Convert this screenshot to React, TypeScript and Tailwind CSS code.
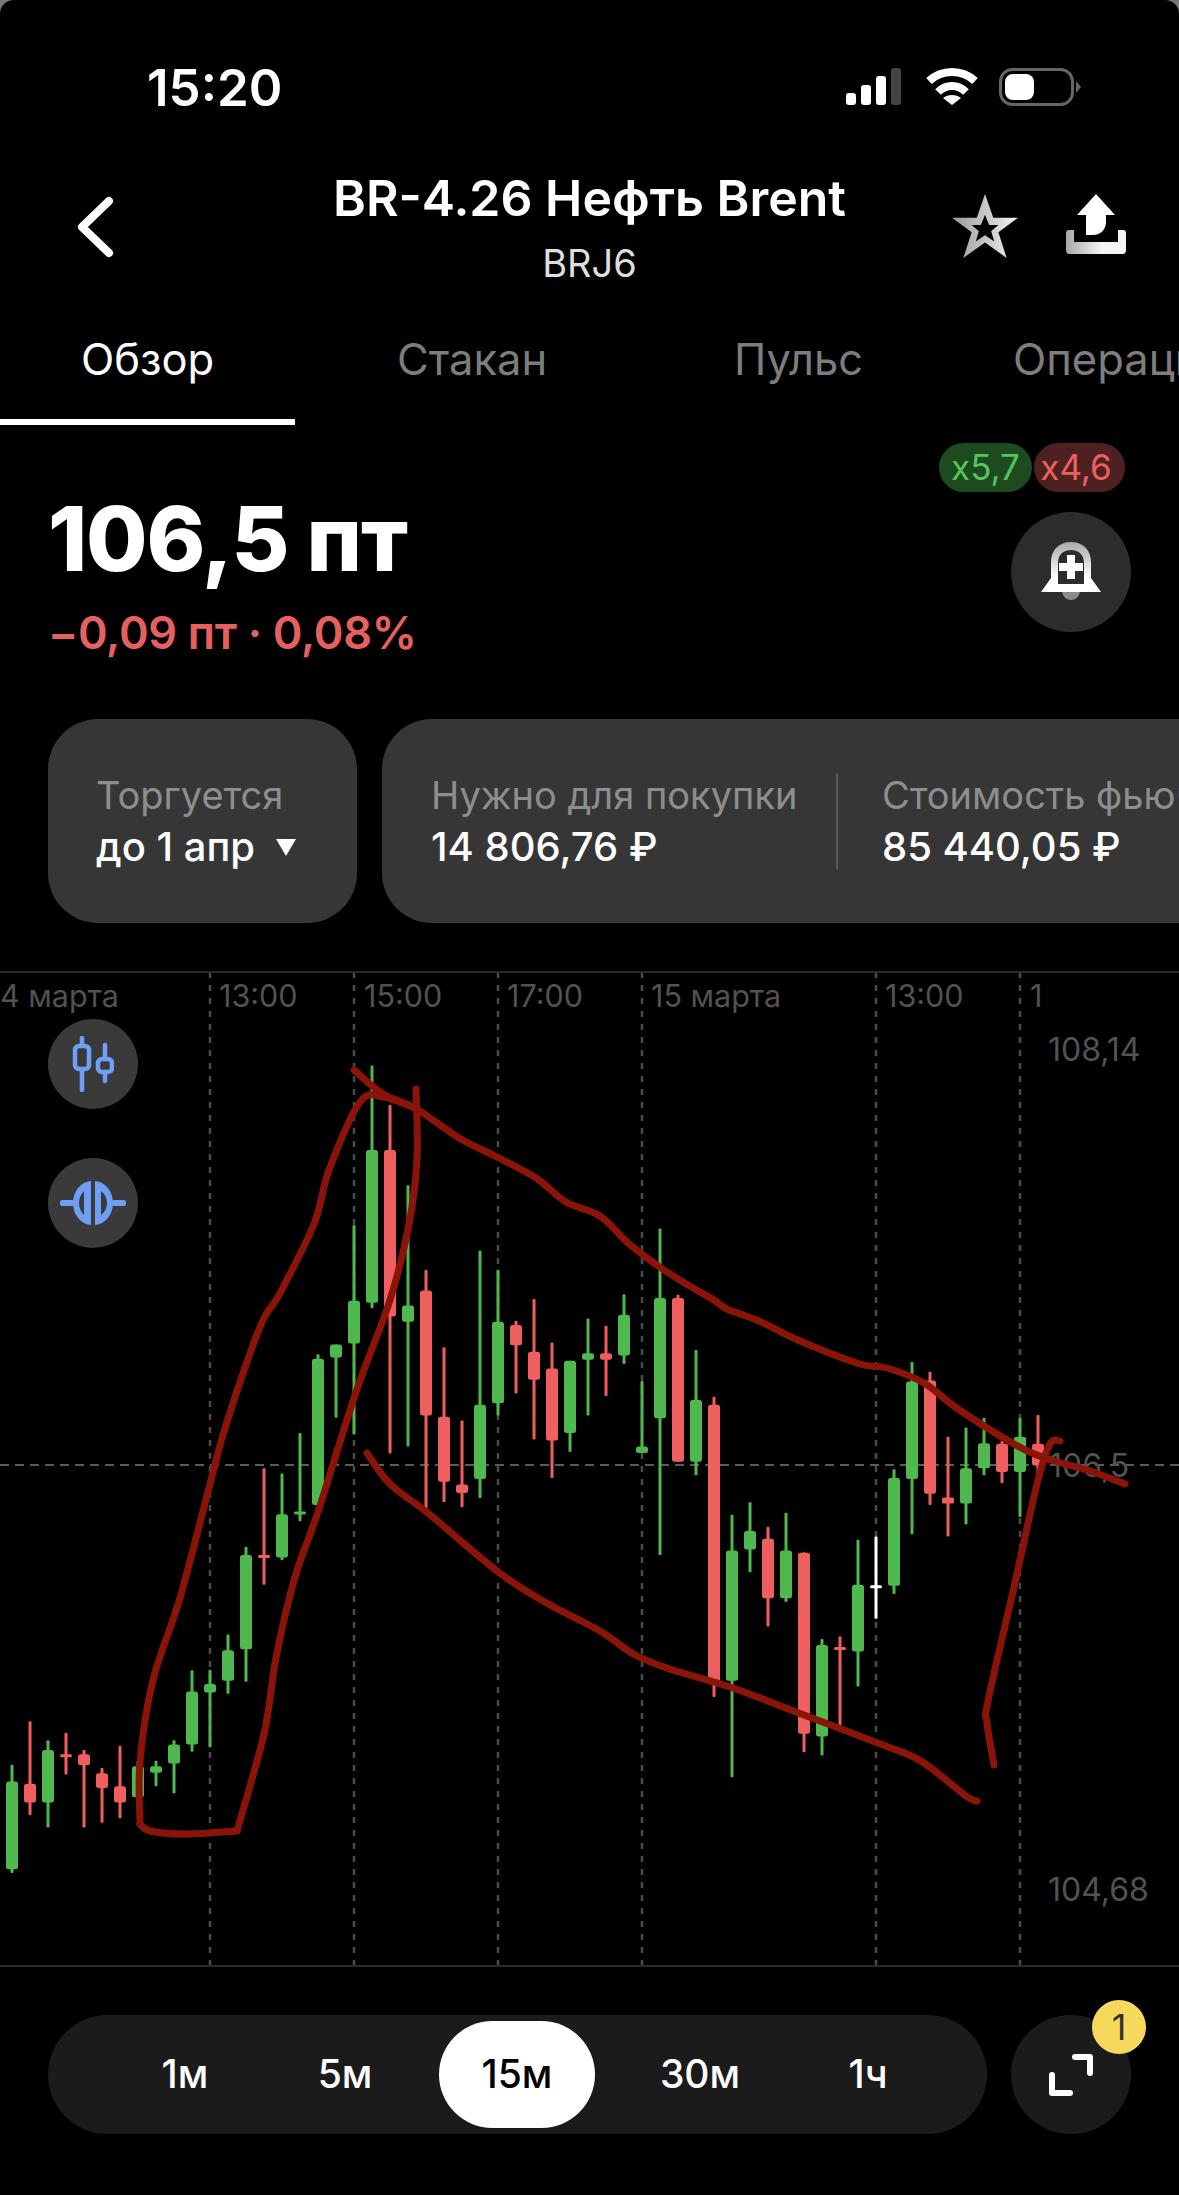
const FONT = "font-['Inter','Noto_Sans',sans-serif]";
const GREEN = "#4fb84f";
const RED = "#ef5f5f";

// wickTop, wickBottom, bodyTop, bodyBottom, measured on a zoomed crop of the chart
type Candle = [string, number, number, number, number];
const candles: Candle[] = [
  ["g", 1337, 1537, 1368, 1530],
  ["r", 1257, 1430, 1372, 1407],
  ["g", 1292, 1453, 1310, 1407],
  ["r", 1278, 1355, 1318, 1321],
  ["r", 1310, 1453, 1318, 1338],
  ["r", 1343, 1444, 1353, 1380],
  ["r", 1302, 1436, 1377, 1407],
  ["g", 1330, 1400, 1340, 1397],
  ["g", 1330, 1377, 1340, 1352],
  ["g", 1292, 1390, 1300, 1335],
  ["g", 1163, 1313, 1202, 1300],
  ["g", 1162, 1305, 1188, 1204],
  ["g", 1097, 1206, 1126, 1182],
  ["g", 935, 1184, 950, 1124],
  ["r", 790, 1005, 950, 955],
  ["g", 800, 960, 875, 955],
  ["g", 725, 888, 870, 875],
  ["g", 580, 860, 588, 858],
  ["g", 562, 697, 562, 586],
  ["g", 342, 728, 481, 560],
  ["g", 47, 495, 203, 485],
  ["r", 120, 763, 203, 510],
  ["g", 268, 750, 490, 520],
  ["r", 424, 865, 462, 693],
  ["r", 567, 853, 695, 815],
  ["r", 702, 862, 820, 836],
  ["g", 389, 845, 673, 810],
  ["g", 424, 693, 520, 670],
  ["r", 518, 652, 526, 563],
  ["r", 478, 737, 575, 627],
  ["r", 558, 808, 606, 739],
  ["g", 592, 760, 592, 725],
  ["g", 514, 693, 578, 590],
  ["r", 527, 657, 578, 590],
  ["g", 469, 598, 507, 582],
  ["g", 629, 762, 750, 762],
  ["g", 348, 950, 476, 698],
  ["r", 470, 778, 476, 778],
  ["g", 572, 803, 664, 778],
  ["r", 658, 1212, 673, 1185],
  ["g", 876, 1360, 942, 1182],
  ["g", 853, 982, 906, 940],
  ["r", 898, 1082, 920, 1030],
  ["g", 872, 1037, 942, 1030],
  ["r", 945, 1314, 946, 1280],
  ["g", 1105, 1320, 1116, 1285],
  ["r", 1100, 1265, 1120, 1125],
  ["g", 922, 1193, 1005, 1128],
  ["w", 916, 1068, 1006, 1010],
  ["g", 792, 1022, 808, 1007],
  ["g", 594, 912, 630, 810],
  ["r", 612, 858, 628, 837],
  ["r", 732, 916, 844, 855],
  ["g", 715, 894, 790, 855],
  ["g", 697, 803, 744, 790],
  ["r", 740, 818, 745, 797],
  ["g", 697, 880, 732, 797],
  ["r", 692, 810, 745, 785],
];

const CHART_TOP = 972;
const toY = (v: number) => 1040 + v / 1.845 - CHART_TOP;

const strokes: number[][][] = [
  [[354,1070],[383,1094],[415,1108],[459,1138],[497,1157],[536,1178],[566,1202],[600,1216],[628,1243],[661,1268],[688,1285],[714,1300],[727,1309],[759,1321],[800,1341],[860,1364],[887,1368],[924,1383],[958,1409],[1014,1444],[1045,1458],[1090,1471],[1125,1484]],
  // the loop is three pieces so its bottom corners stay sharp
  [[416,1089],[417,1159],[409,1224],[390,1300],[356,1392],[318,1512],[295,1577],[276,1658],[264,1734],[237,1831]],
  [[237,1831],[184,1834],[150,1831],[140,1824]],
  [[140,1824],[140,1761],[153,1680],[180,1598],[210,1484],[226,1425],[260,1327],[279,1295],[314,1224],[329,1170],[360,1102],[383,1097],[415,1108]],
  [[367,1453],[390,1484],[429,1514],[497,1571],[543,1601],[600,1631],[635,1655],[673,1670],[733,1688],[804,1715],[883,1745],[921,1761],[966,1796],[977,1801]],
  [[1060,1441],[1050,1444],[1037,1484],[1014,1587],[988,1701],[987,1723],[994,1765]],
];

// catmull-rom through the hand drawn points
function smooth(pts: number[][]) {
  let d = `M${pts[0][0]} ${pts[0][1] - CHART_TOP}`;
  for (let i = 0; i < pts.length - 1; i++) {
    const p0 = pts[Math.max(i - 1, 0)];
    const p1 = pts[i];
    const p2 = pts[i + 1];
    const p3 = pts[Math.min(i + 2, pts.length - 1)];
    const c1x = p1[0] + (p2[0] - p0[0]) / 6;
    const c1y = p1[1] + (p2[1] - p0[1]) / 6 - CHART_TOP;
    const c2x = p2[0] - (p3[0] - p1[0]) / 6;
    const c2y = p2[1] - (p3[1] - p1[1]) / 6 - CHART_TOP;
    d += ` C${c1x} ${c1y} ${c2x} ${c2y} ${p2[0]} ${p2[1] - CHART_TOP}`;
  }
  return d;
}

const gridX = [210, 354, 498, 642, 876, 1020];

function StatusBar() {
  return (
    <div className="flex h-[150px] items-start justify-between pl-[147px] pr-[98px] pt-[59px]">
      <span className="text-[51px] font-semibold leading-[58px] text-white">15:20</span>
      <div className="flex items-center pt-[9px]">
        <svg width="56" height="38" viewBox="0 0 56 38">
          <rect x="0" y="25" width="10" height="12" rx="3" fill="#fff" />
          <rect x="15" y="17" width="10" height="20" rx="3" fill="#fff" />
          <rect x="30" y="8" width="10" height="29" rx="3" fill="#fff" />
          <rect x="45" y="0" width="10" height="37" rx="3" fill="#444" />
        </svg>
        <svg width="52" height="38" viewBox="0 0 52 38" fill="none" stroke="#fff" strokeWidth="8" className="ml-[24px] mr-[21px]">
          <path d="M3 13C16 1 36 1 49 13" />
          <path d="M12 24C20 16 32 16 40 24" />
          <path d="M26 37L17 30C22 26 30 26 35 30Z" fill="#fff" stroke="none" />
        </svg>
        <svg width="82" height="38" viewBox="0 0 82 38">
          <rect x="1.5" y="1.5" width="72" height="35" rx="12" fill="none" stroke="#666" strokeWidth="3" />
          <rect x="6" y="6" width="29" height="26" rx="8" fill="#fff" />
          <path d="M77 13L82 19L77 25Z" fill="#666" />
        </svg>
      </div>
    </div>
  );
}

function Header() {
  return (
    <div className="relative flex h-[135px] items-start justify-between pl-[76px] pr-[53px]">
      <svg width="38" height="62" viewBox="0 0 38 62" fill="none" stroke="#fff" strokeWidth="8" strokeLinecap="round" strokeLinejoin="round" className="mt-[46px]">
        <path d="M33 5L6 31L33 57" />
      </svg>
      <div className="absolute left-0 right-0 top-[18px] text-center">
        <div className="text-[50px] font-semibold leading-[60px] text-white">BR-4.26 Нефть Brent</div>
        <div className="mt-[13px] text-[38px] leading-[44px] text-[#dedede]">BRJ6</div>
      </div>
      <div className="flex items-start gap-[47px] pt-[44px]">
        <svg width="68" height="64" viewBox="0 0 66 62">
          <defs>
            <linearGradient id="starFill" x1="0" y1="0" x2="1" y2="0">
              <stop offset="0" stopColor="#9a9a9a" />
              <stop offset="1" stopColor="#f2f2f2" />
            </linearGradient>
          </defs>
          <path
            fillRule="evenodd"
            d="M33 0L41 23H65L46 37L54 62L33 47L12 62L20 37L1 23H25ZM33 20L29 30H20L27 36L24 46L33 40L42 46L39 36L46 30H37Z"
            fill="url(#starFill)"
          />
        </svg>
        <svg width="60" height="60" viewBox="0 0 60 60">
          <defs>
            <linearGradient id="trayFill" x1="0" y1="0" x2="1" y2="0">
              <stop offset="0" stopColor="#a8a8a8" />
              <stop offset="0.6" stopColor="#f4f4f4" />
            </linearGradient>
          </defs>
          <path d="M30 0L49 21H40V28C40 35 35 41 27 41H20V21H11Z" fill="#fff" />
          <path
            d="M0 39C0 37 1 36 3 36H8V48H52V36H57C59 36 60 37 60 39V56C60 58 59 60 57 60H3C1 60 0 58 0 56Z"
            fill="url(#trayFill)"
          />
        </svg>
      </div>
    </div>
  );
}

function Tabs() {
  const tabs = [
    { label: "Стакан", className: "left-[397px]" },
    { label: "Пульс", className: "left-[734px]" },
    { label: "Операции", className: "left-[1013px]" },
  ];
  return (
    <div className="relative h-[140px] overflow-hidden">
      <div className="flex h-[140px] w-[295px] items-start justify-center border-b-[6px] border-white pt-[49px] text-[43.5px] leading-[50px] text-white">
        Обзор
      </div>
      {tabs.map((t) => (
        <span key={t.label} className={`absolute top-[49px] text-[43.5px] leading-[50px] text-[#7d7d7d] ${t.className}`}>
          {t.label}
        </span>
      ))}
    </div>
  );
}

function PriceBlock() {
  return (
    <div className="relative h-[294px] pl-[48px]">
      <div className="absolute right-[54px] top-[18px] flex items-center gap-[2px]">
        <span className="flex h-[49px] w-[93px] items-center justify-center rounded-full bg-[#1d4a1f] text-[35px] text-[#58c25c]">
          x5,7
        </span>
        <span className="flex h-[49px] w-[91px] items-center justify-center rounded-full bg-[#4e2121] pr-[7px] text-[35px] text-[#ee6060]">
          x4,6
        </span>
      </div>
      <div className="absolute right-[48px] top-[87px] flex h-[120px] w-[120px] items-center justify-center rounded-full bg-[#2c2c2c]">
        <svg width="60" height="60" viewBox="0 0 60 60">
          <defs>
            <linearGradient id="bellFill" x1="0" y1="0" x2="0" y2="1">
              <stop offset="0" stopColor="#a9a9a9" />
              <stop offset="0.7" stopColor="#ffffff" />
            </linearGradient>
          </defs>
          <path d="M21 48H39C39 54 35 58 30 58C25 58 21 54 21 48Z" fill="#8c8c8c" />
          <path
            fillRule="evenodd"
            d="M30 0C42 0 50 8 50 20V36L60 50H0L10 36V20C10 8 18 0 30 0ZM30 8C22 8 17 13 17 21V42H43V21C43 13 38 8 30 8Z"
            fill="url(#bellFill)"
          />
          <path d="M26 13H34V21H42V29H34V37H26V29H18V21H26Z" fill="#fff" />
        </svg>
      </div>
      <div className="pt-[61px] text-[89px] font-extrabold leading-[106px] tracking-[-1.2px] text-white">106,5 пт</div>
      <div className="mt-[16px] text-[45px] font-semibold leading-[50px] tracking-[-0.3px] text-[#e5605f]">
        −0,09 пт · 0,08%
      </div>
    </div>
  );
}

function InfoCards() {
  return (
    <div className="flex h-[204px] gap-[25px] overflow-hidden pl-[48px]">
      <div className="flex w-[309px] shrink-0 flex-col justify-center rounded-[50px] bg-[#363636] pl-[48px]">
        <span className="text-[38px] leading-[48px] text-[#8e8e8e]">Торгуется</span>
        <span className="mt-[4px] flex items-center text-[40px] font-medium leading-[48px] text-white">
          до 1 апр
          <svg width="22" height="18" viewBox="0 0 22 18" className="ml-[20px]">
            <path d="M1 1H21L11 18Z" fill="#fff" />
          </svg>
        </span>
      </div>
      <div className="flex w-[900px] shrink-0 items-center rounded-[50px] bg-[#363636] pl-[49px]">
        <div className="flex w-[369px] shrink-0 flex-col whitespace-nowrap">
          <span className="text-[38px] leading-[48px] text-[#8e8e8e]">Нужно для покупки</span>
          <span className="mt-[4px] text-[40px] font-medium leading-[48px] text-white">14 806,76 ₽</span>
        </div>
        <div className="ml-[36px] h-[96px] w-[2px] shrink-0 bg-[#5a5a5a]" />
        <div className="ml-[44px] flex flex-col whitespace-nowrap">
          <span className="text-[38px] leading-[48px] text-[#8e8e8e]">Стоимость фьючерса</span>
          <span className="mt-[4px] text-[40px] font-medium leading-[48px] text-white">85 440,05 ₽</span>
        </div>
      </div>
    </div>
  );
}

function ChartArea() {
  const dates = [
    { label: "4 марта", className: "left-0" },
    { label: "13:00", className: "left-[219px]" },
    { label: "15:00", className: "left-[364px]" },
    { label: "17:00", className: "left-[507px]" },
    { label: "15 марта", className: "left-[651px]" },
    { label: "13:00", className: "left-[885px]" },
    { label: "1", className: "left-[1030px]" },
  ];
  return (
    <div className="relative mt-[48px] h-[996px] overflow-hidden border-y-[2px] border-[#2a2a2a]">
      <svg width="1179" height="996" className="absolute left-0 top-[-1px]">
        {gridX.map((x) => (
          <line key={x} x1={x} x2={x} y1="0" y2="996" stroke="#4a4a4a" strokeWidth="2.5" strokeDasharray="6 7" />
        ))}
        <line x1="0" x2="1179" y1="493" y2="493" stroke="#5c5c5c" strokeWidth="2" strokeDasharray="9 6" />
        {candles.map(([c, wt, wb, bt, bb], i) => {
          const x = 12 + 18 * i;
          const fill = c === "g" ? GREEN : c === "r" ? RED : "#fff";
          return (
            <g key={i} fill={fill}>
              <rect x={x - 1.5} y={toY(wt)} width="3" height={(wb - wt) / 1.845} rx="1" />
              <rect
                x={x - 6}
                y={toY(bt)}
                width="12"
                height={Math.max((bb - bt) / 1.845, 3)}
                rx={(bb - bt) / 1.845 > 6 ? 2.5 : 1.5}
              />
            </g>
          );
        })}
      </svg>

      {dates.map((d) => (
        <span key={d.label + d.className} className={`absolute top-[5px] text-[30.5px] leading-[36px] text-[#525252] ${d.className}`}>
          {d.label}
        </span>
      ))}
      <span className="absolute left-[1048px] top-[59px] text-[32px] leading-[36px] text-[#525252]">108,14</span>
      <span className="absolute left-[1049px] top-[475px] text-[32px] leading-[36px] text-[#525252]">106,5</span>
      <span className="absolute left-[1048px] top-[899px] text-[32px] leading-[36px] text-[#525252]">104,68</span>

      {/* hand drawn marks sit above the price labels */}
      <svg width="1179" height="996" className="pointer-events-none absolute left-0 top-[-1px]">
        {strokes.map((pts, i) => (
          <path
            key={i}
            d={smooth(pts)}
            fill="none"
            stroke="#8a1408"
            strokeWidth="7"
            strokeLinecap="round"
            strokeLinejoin="round"
          />
        ))}
      </svg>

      <div className="absolute left-[48px] top-[46px] flex h-[90px] w-[90px] items-center justify-center rounded-full bg-[#3a3a3a]">
        <svg width="42" height="56" viewBox="0 0 42 56" fill="none" stroke="#6f9ff5" strokeWidth="4.5" strokeLinecap="round">
          <path d="M10 2V10M10 33V54" />
          <rect x="3" y="10" width="14" height="23" rx="4" />
          <path d="M33 9V23M33 36V45" />
          <rect x="26" y="23" width="14" height="13" rx="4" />
        </svg>
      </div>
      <div className="absolute left-[48px] top-[185px] flex h-[90px] w-[90px] items-center justify-center rounded-full bg-[#3a3a3a]">
        <svg width="66" height="44" viewBox="0 0 66 44" fill="#6f9ff5">
          <rect x="0" y="19" width="14" height="6" rx="2" />
          <rect x="52" y="19" width="14" height="6" rx="2" />
          <path
            fillRule="evenodd"
            d="M31 0V44C20 43 13 33 13 22C13 11 20 1 31 0ZM24 10C21 13 19 17 19 22C19 27 21 31 24 34Z"
          />
          <path
            fillRule="evenodd"
            d="M35 0C46 1 53 11 53 22C53 33 46 43 35 44ZM41 10V34C45 31 47 27 47 22C47 17 45 13 41 10Z"
          />
        </svg>
      </div>
    </div>
  );
}

function BottomBar() {
  return (
    <div className="flex gap-[24px] pl-[48px] pt-[48px]">
      <div className="flex h-[119px] w-[939px] items-center rounded-full bg-[#1b1b1b] pl-[71px] text-[39px] font-medium text-white">
        <span className="w-[132px] text-center">1м</span>
        <span className="w-[188px] text-center">5м</span>
        <span className="flex h-[107px] w-[156px] items-center justify-center rounded-full bg-white text-black">15м</span>
        <span className="w-[210px] text-center">30м</span>
        <span className="w-[126px] text-center">1ч</span>
      </div>
      <div className="relative flex h-[119px] w-[120px] items-center justify-center rounded-full bg-[#1b1b1b]">
        <svg width="44" height="44" viewBox="0 0 44 44" fill="none" stroke="#fff" strokeWidth="6" strokeLinecap="round" strokeLinejoin="round">
          <path d="M3 22V40H21" />
          <path d="M26 4H41V20" />
        </svg>
        <span className="absolute left-[81px] top-[-15px] flex h-[54px] w-[54px] items-center justify-center rounded-full bg-[#f6d95a] text-[36px] leading-none text-[#333]">
          1
        </span>
      </div>
    </div>
  );
}

export default function App() {
  return (
    <div className="h-[2195px] w-[1179px] overflow-hidden bg-[#777]">
      <div className={`h-[2195px] w-[1179px] overflow-hidden rounded-t-[14px] bg-black ${FONT}`}>
        <StatusBar />
        <Header />
        <Tabs />
        <PriceBlock />
        <InfoCards />
        <ChartArea />
        <BottomBar />
      </div>
    </div>
  );
}
